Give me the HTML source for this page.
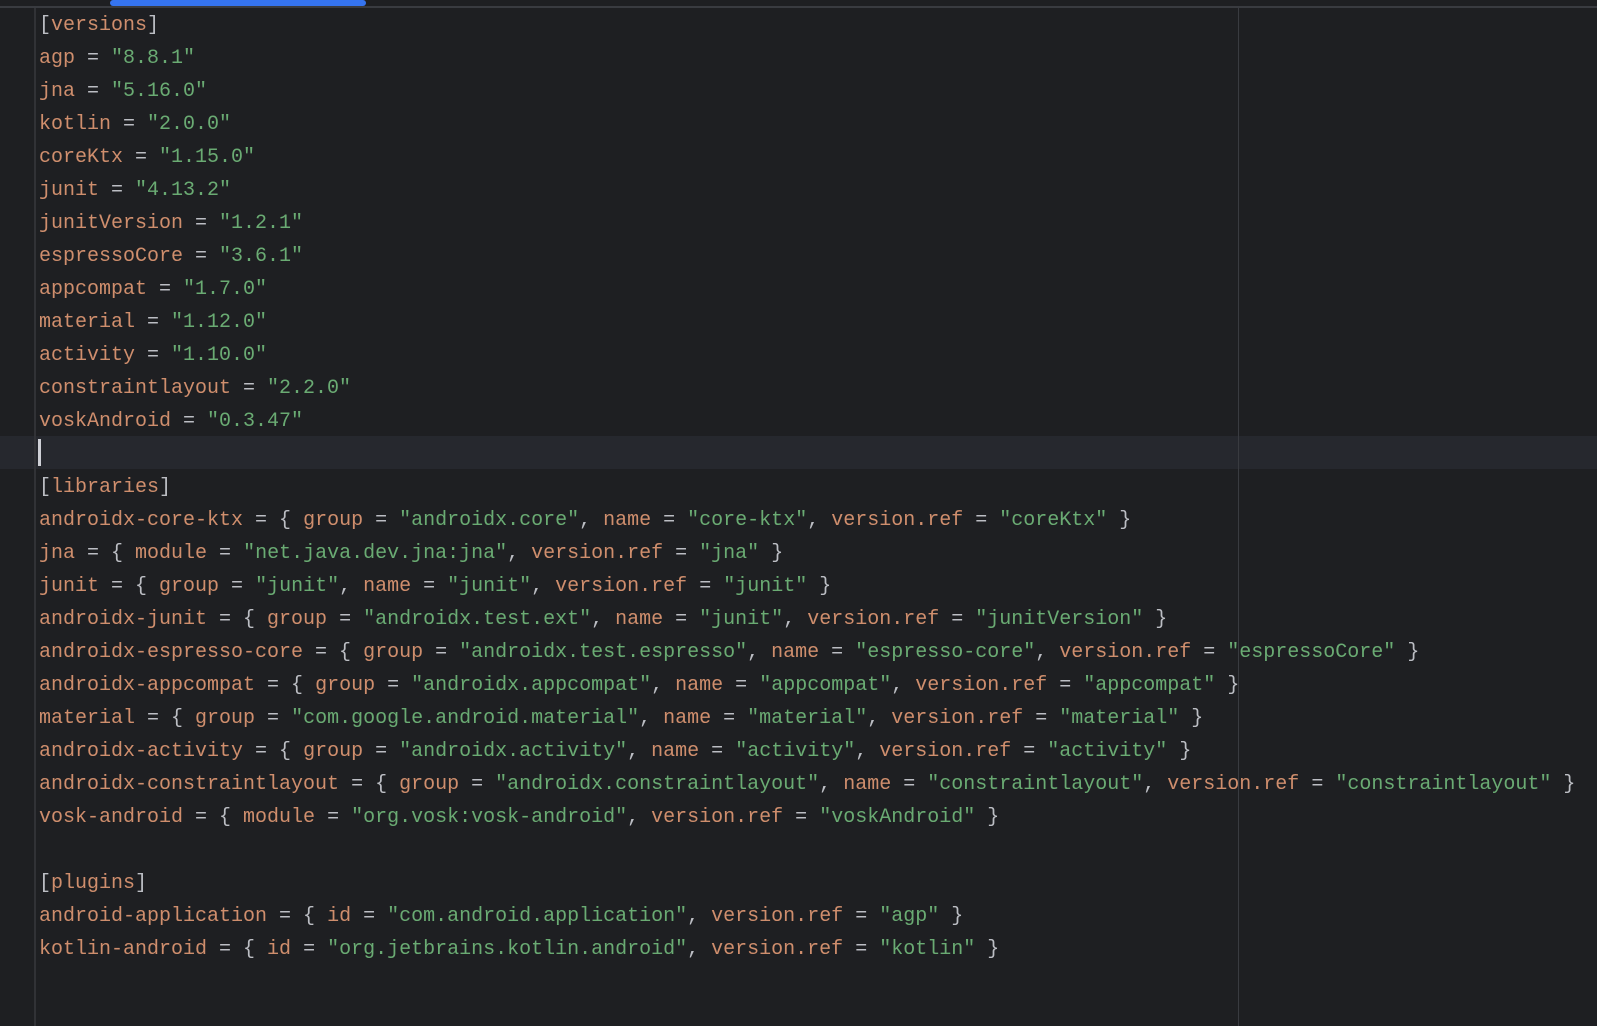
<!DOCTYPE html>
<html><head><meta charset="utf-8"><style>
html,body{margin:0;padding:0;background:#1e1f22;width:1597px;height:1026px;overflow:hidden}
.top{position:absolute;left:0;top:6px;width:1597px;height:2px;background:#393b40}
.sb{position:absolute;left:110px;top:0;width:256px;height:6px;background:#3574f0;border-radius:3px}
.gut{position:absolute;left:34px;top:8px;width:2px;height:1018px;background:#313236}
.guide{position:absolute;left:1238px;top:8px;width:1px;height:1018px;background:#393b40}
.hl{position:absolute;left:0;top:436px;width:1597px;height:33px;background:#26282e}
.cur{position:absolute;left:38px;top:439px;width:3px;height:27px;background:#ced0d6}
.code{position:absolute;left:39px;top:9px;font-family:"Liberation Mono",monospace;font-size:20px;line-height:33px;color:#bcbec4;white-space:pre}
.k{color:#cf8e6d}.s{color:#6aab73}
</style></head><body>
<div class="top"></div><div class="sb"></div>
<div class="hl"></div>
<div class="gut"></div><div class="guide"></div>
<div class="cur"></div>
<div class="code">[<span class="k">versions</span>]
<span class="k">agp</span> = <span class="s">"8.8.1"</span>
<span class="k">jna</span> = <span class="s">"5.16.0"</span>
<span class="k">kotlin</span> = <span class="s">"2.0.0"</span>
<span class="k">coreKtx</span> = <span class="s">"1.15.0"</span>
<span class="k">junit</span> = <span class="s">"4.13.2"</span>
<span class="k">junitVersion</span> = <span class="s">"1.2.1"</span>
<span class="k">espressoCore</span> = <span class="s">"3.6.1"</span>
<span class="k">appcompat</span> = <span class="s">"1.7.0"</span>
<span class="k">material</span> = <span class="s">"1.12.0"</span>
<span class="k">activity</span> = <span class="s">"1.10.0"</span>
<span class="k">constraintlayout</span> = <span class="s">"2.2.0"</span>
<span class="k">voskAndroid</span> = <span class="s">"0.3.47"</span>
 
[<span class="k">libraries</span>]
<span class="k">androidx-core-ktx</span> = { <span class="k">group</span> = <span class="s">"androidx.core"</span>, <span class="k">name</span> = <span class="s">"core-ktx"</span>, <span class="k">version.ref</span> = <span class="s">"coreKtx"</span> }
<span class="k">jna</span> = { <span class="k">module</span> = <span class="s">"net.java.dev.jna:jna"</span>, <span class="k">version.ref</span> = <span class="s">"jna"</span> }
<span class="k">junit</span> = { <span class="k">group</span> = <span class="s">"junit"</span>, <span class="k">name</span> = <span class="s">"junit"</span>, <span class="k">version.ref</span> = <span class="s">"junit"</span> }
<span class="k">androidx-junit</span> = { <span class="k">group</span> = <span class="s">"androidx.test.ext"</span>, <span class="k">name</span> = <span class="s">"junit"</span>, <span class="k">version.ref</span> = <span class="s">"junitVersion"</span> }
<span class="k">androidx-espresso-core</span> = { <span class="k">group</span> = <span class="s">"androidx.test.espresso"</span>, <span class="k">name</span> = <span class="s">"espresso-core"</span>, <span class="k">version.ref</span> = <span class="s">"espressoCore"</span> }
<span class="k">androidx-appcompat</span> = { <span class="k">group</span> = <span class="s">"androidx.appcompat"</span>, <span class="k">name</span> = <span class="s">"appcompat"</span>, <span class="k">version.ref</span> = <span class="s">"appcompat"</span> }
<span class="k">material</span> = { <span class="k">group</span> = <span class="s">"com.google.android.material"</span>, <span class="k">name</span> = <span class="s">"material"</span>, <span class="k">version.ref</span> = <span class="s">"material"</span> }
<span class="k">androidx-activity</span> = { <span class="k">group</span> = <span class="s">"androidx.activity"</span>, <span class="k">name</span> = <span class="s">"activity"</span>, <span class="k">version.ref</span> = <span class="s">"activity"</span> }
<span class="k">androidx-constraintlayout</span> = { <span class="k">group</span> = <span class="s">"androidx.constraintlayout"</span>, <span class="k">name</span> = <span class="s">"constraintlayout"</span>, <span class="k">version.ref</span> = <span class="s">"constraintlayout"</span> }
<span class="k">vosk-android</span> = { <span class="k">module</span> = <span class="s">"org.vosk:vosk-android"</span>, <span class="k">version.ref</span> = <span class="s">"voskAndroid"</span> }
 
[<span class="k">plugins</span>]
<span class="k">android-application</span> = { <span class="k">id</span> = <span class="s">"com.android.application"</span>, <span class="k">version.ref</span> = <span class="s">"agp"</span> }
<span class="k">kotlin-android</span> = { <span class="k">id</span> = <span class="s">"org.jetbrains.kotlin.android"</span>, <span class="k">version.ref</span> = <span class="s">"kotlin"</span> }</div>
</body></html>
